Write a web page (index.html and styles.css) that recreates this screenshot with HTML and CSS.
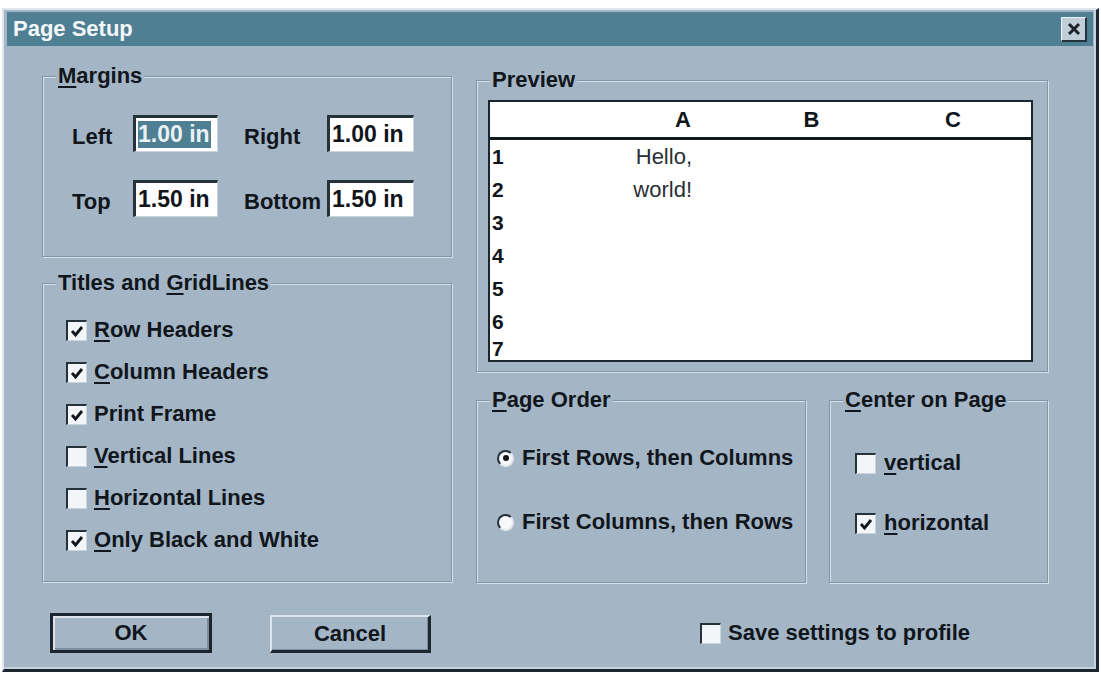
FILE: index.html
```html
<!DOCTYPE html>
<html>
<head>
<meta charset="utf-8">
<title>Page Setup</title>
<link rel="stylesheet" href="styles.css">
</head>
<body>
<div class="dialog">
  <div class="titlebar">
    <span class="title">Page Setup</span>
    <span class="close"><svg width="14" height="14" viewBox="0 0 14 14"><path d="M2 2 L12 12 M12 2 L2 12" stroke="#1d2329" stroke-width="3" fill="none"/></svg></span>
  </div>
  <div class="content">
    <div class="col-left">
      <div class="group margins">
        <span class="legend"><u>M</u>argins</span>
        <div class="margin-grid">
          <span class="lbl">Left</span>
          <span class="field"><span class="sel">1.00 in</span></span>
          <span class="lbl lbl2">Right</span>
          <span class="field field2">1.00 in</span>
          <span class="lbl">Top</span>
          <span class="field">1.50 in</span>
          <span class="lbl lbl2">Bottom</span>
          <span class="field field2">1.50 in</span>
        </div>
      </div>
      <div class="group titles">
        <span class="legend">Titles and <u>G</u>ridLines</span>
        <div class="check-row"><span class="box checked"><svg width="16" height="16" viewBox="0 0 16 16"><path d="M3 8 L6.5 12 L13 4" stroke="#11171c" stroke-width="2.8" fill="none"/></svg></span><span><u>R</u>ow Headers</span></div>
        <div class="check-row"><span class="box checked"><svg width="16" height="16" viewBox="0 0 16 16"><path d="M3 8 L6.5 12 L13 4" stroke="#11171c" stroke-width="2.8" fill="none"/></svg></span><span><u>C</u>olumn Headers</span></div>
        <div class="check-row"><span class="box checked"><svg width="16" height="16" viewBox="0 0 16 16"><path d="M3 8 L6.5 12 L13 4" stroke="#11171c" stroke-width="2.8" fill="none"/></svg></span><span>Print Frame</span></div>
        <div class="check-row"><span class="box"></span><span><u>V</u>ertical Lines</span></div>
        <div class="check-row"><span class="box"></span><span><u>H</u>orizontal Lines</span></div>
        <div class="check-row"><span class="box checked"><svg width="16" height="16" viewBox="0 0 16 16"><path d="M3 8 L6.5 12 L13 4" stroke="#11171c" stroke-width="2.8" fill="none"/></svg></span><span><u>O</u>nly Black and White</span></div>
      </div>
    </div>
    <div class="col-right">
      <div class="group preview">
        <span class="legend">Preview</span>
        <div class="sheet">
          <div class="sheet-head"><span></span><span>A</span><span>B</span><span>C</span></div>
          <div class="sheet-body">
            <div class="sheet-row"><span class="num">1</span><span class="cell">Hello,</span></div>
            <div class="sheet-row"><span class="num">2</span><span class="cell">world!</span></div>
            <div class="sheet-row"><span class="num">3</span></div>
            <div class="sheet-row"><span class="num">4</span></div>
            <div class="sheet-row"><span class="num">5</span></div>
            <div class="sheet-row"><span class="num">6</span></div>
            <div class="sheet-row last"><span class="num">7</span></div>
          </div>
        </div>
      </div>
      <div class="lower">
        <div class="group order">
          <span class="legend"><u>P</u>age Order</span>
          <div class="radio-row"><span class="radio on"></span><span>First Rows, then Columns</span></div>
          <div class="radio-row"><span class="radio"></span><span>First Columns, then Rows</span></div>
        </div>
        <div class="group center">
          <span class="legend"><u>C</u>enter on Page</span>
          <div class="check-row c-row"><span class="box"></span><span><u>v</u>ertical</span></div>
          <div class="check-row c-row"><span class="box checked"><svg width="16" height="16" viewBox="0 0 16 16"><path d="M3 8 L6.5 12 L13 4" stroke="#11171c" stroke-width="2.8" fill="none"/></svg></span><span><u>h</u>orizontal</span></div>
        </div>
      </div>
    </div>
  </div>
  <div class="footer">
    <span class="btn btn-default">OK</span>
    <span class="btn btn-cancel">Cancel</span>
    <div class="check-row save"><span class="box"></span><span>Save settings to profile</span></div>
  </div>
</div>
</body>
</html>
```

FILE: styles.css
```css
* { box-sizing: border-box; }

html, body {
  margin: 0;
  padding: 0;
  background: #ffffff;
}

body {
  font-family: "Liberation Sans", Arial, sans-serif;
  font-weight: bold;
  font-size: 22px;
  color: #10161b;
}

u { text-decoration-thickness: 2px; text-underline-offset: 3px; }

.dialog {
  margin: 8px 0 0 2px;
  width: 1097px;
  height: 664px;
  background: #a4b5c5;
  border-style: solid;
  border-width: 2px 3px 3px 2px;
  border-color: #dfe7ee #1b2630 #1b2630 #dfe7ee;
  box-shadow: inset -2px -2px 0 #c6d3de;
  padding: 2px 3px;
}

.titlebar {
  height: 34px;
  background: #4e7f93;
  display: flex;
  align-items: center;
  justify-content: space-between;
  padding: 0 6px 0 6px;
}

.title {
  color: #f4f8fa;
  font-size: 22px;
  font-weight: bold;
}

.close {
  width: 26px;
  height: 25px;
  background: #c0ced9;
  border-style: solid;
  border-width: 1px 2px 2px 1px;
  border-color: #eef3f6 #24323d #24323d #eef3f6;
  display: flex;
  align-items: center;
  justify-content: center;
}

.content {
  display: flex;
  gap: 24px;
  padding-left: 35px;
  height: 537px;
}

.col-left {
  width: 410px;
  margin-top: 30px;
}

.col-right {
  width: 572px;
  margin-top: 34px;
}

.group {
  position: relative;
  border: 1px solid #8296a8;
  box-shadow: 1px 1px 0 #d6e1ea, inset 1px 1px 0 #d6e1ea;
}

.legend {
  position: absolute;
  top: -13px;
  left: 13px;
  padding: 0 2px;
  line-height: 24px;
  background: #a4b5c5;
  white-space: nowrap;
}

.margins {
  height: 181px;
  padding: 38px 0 0 29px;
}

.margin-grid {
  display: grid;
  grid-template-columns: 61px 113px 81px 87px;
  grid-auto-rows: 37px;
  row-gap: 28px;
}

.lbl {
  align-self: center;
  padding-top: 7px;
}

.lbl2 { margin-left: -2px; }

.field {
  width: 85px;
  height: 37px;
  background: #ffffff;
  border-style: solid;
  border-width: 3px 1px 1px 3px;
  border-color: #26323a #c9d4dc #c9d4dc #26323a;
  display: flex;
  align-items: center;
  padding-left: 2px;
  font-size: 23px;
  white-space: nowrap;
  overflow: hidden;
}

.field2 { width: 87px; }

.sel {
  background: #4e7f93;
  color: #eaf1f5;
  line-height: 27px;
  padding-right: 1px;
}

.titles {
  height: 299px;
  margin-top: 26px;
  padding: 25px 0 0 23px;
}

.check-row {
  display: flex;
  align-items: center;
  gap: 7px;
  height: 42px;
  white-space: nowrap;
}

.box {
  width: 21px;
  height: 21px;
  flex: none;
  background: #f3f6f8;
  border-style: solid;
  border-width: 2px 1px 1px 2px;
  border-color: #26323a #c9d4dc #c9d4dc #26323a;
  display: flex;
  align-items: center;
  justify-content: center;
}

.preview {
  height: 292px;
  padding: 19px 0 0 11px;
}

.sheet {
  width: 545px;
  height: 262px;
  background: #ffffff;
  border: 2px solid #1b262e;
  overflow: hidden;
}

.sheet-head {
  display: grid;
  grid-template-columns: 128px 130px 127px 1fr;
  height: 38px;
  border-bottom: 3px solid #121a20;
  align-items: center;
  text-align: center;
}

.sheet-row {
  display: grid;
  grid-template-columns: 128px 130px;
  height: 33px;
  align-items: center;
}

.sheet-row.last {
  height: 22px;
}

.num {
  padding-left: 2px;
  font-size: 21px;
  line-height: 22px;
}

.cell {
  font-weight: normal;
  color: #2a3035;
  text-align: right;
  padding-right: 56px;
}

.lower {
  display: flex;
  gap: 23px;
  margin-top: 28px;
}

.order {
  width: 330px;
  height: 183px;
  padding: 41px 0 0 20px;
  display: flex;
  flex-direction: column;
  gap: 32px;
}

.radio-row {
  display: flex;
  align-items: center;
  gap: 8px;
  height: 32px;
  white-space: nowrap;
}

.radio {
  width: 17px;
  height: 17px;
  flex: none;
  border-radius: 50%;
  background: #f7f9fa;
  border: 2px solid;
  border-color: #26323a #e2e9ee #e2e9ee #26323a;
  display: flex;
  align-items: center;
  justify-content: center;
}

.radio.on::after {
  content: "";
  width: 6px;
  height: 6px;
  border-radius: 50%;
  background: #10161b;
}

.center {
  width: 219px;
  height: 183px;
  padding: 46px 0 0 25px;
  display: flex;
  flex-direction: column;
  gap: 28px;
}

.c-row {
  height: 32px;
  gap: 8px;
}

.footer {
  display: flex;
  align-items: flex-start;
  margin-top: 30px;
  padding-left: 43px;
}

.btn {
  display: flex;
  align-items: center;
  justify-content: center;
  background: #a4b5c5;
}

.btn-default {
  width: 162px;
  height: 40px;
  border: 3px solid #1a252e;
  box-shadow: inset 2px 2px 0 #dbe4eb, inset -2px -2px 0 #7a8d9f;
}

.btn-cancel {
  width: 161px;
  height: 38px;
  margin-top: 2px;
  margin-left: 58px;
  border-style: solid;
  border-width: 2px 3px 3px 2px;
  border-color: #dce5ec #1c2730 #1c2730 #dce5ec;
  box-shadow: inset -1px -1px 0 #7a8d9f;
}

.save {
  margin-left: 269px;
  height: 40px;
  gap: 7px;
}
```
